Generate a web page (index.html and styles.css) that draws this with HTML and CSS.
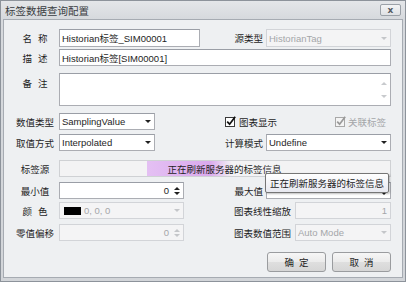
FILE: index.html
```html
<!DOCTYPE html>
<html lang="zh-CN">

<head>
  <meta charset="UTF-8">
  <meta name="viewport" content="width=device-width, initial-scale=1.0">
  <title>标签数据查询配置</title>
  <link rel="stylesheet" href="styles.css">
</head>

<body>
  <div class="win">
    <div class="titlebar">
      <span class="title">标签数据查询配置</span>
      <span class="close">x</span>
    </div>
    <div class="panel">
      <div class="row r1">
        <span class="lbl"><span class="sp">名称</span></span>
        <div class="fld w-name">Historian标签_SIM00001</div>
        <div class="right">
          <span class="rlbl">源类型</span>
          <div class="fld dis w-wide">HistorianTag<i class="arr"></i></div>
        </div>
      </div>
      <div class="row r2">
        <span class="lbl"><span class="sp">描述</span></span>
        <div class="fld grow">Historian标签[SIM00001]</div>
      </div>
      <div class="row r3">
        <span class="lbl memo-lbl"><span class="sp">备注</span></span>
        <div class="fld grow memo">
          <span class="vscroll"><i class="up"></i><i class="dn"></i></span>
        </div>
      </div>
      <div class="row r4">
        <span class="lbl">数值类型</span>
        <div class="fld w-combo">SamplingValue<i class="arr"></i></div>
        <div class="right checks">
          <span class="chk">
            <svg width="11" height="11" viewBox="0 0 11 11"><rect x="0.5" y="1.5" width="9" height="9" fill="#fff" stroke="#3a3a3a"/><path d="M2.2 5.6 L4.6 8.2 L10.2 0.8" fill="none" stroke="#111" stroke-width="1.7"/></svg>
            图表显示
          </span>
          <span class="chk off">
            <svg width="11" height="11" viewBox="0 0 11 11"><rect x="0.5" y="1.5" width="9" height="9" fill="#f4f4f4" stroke="#a8a8a8"/><path d="M2.2 5.6 L4.6 8.2 L10.2 0.8" fill="none" stroke="#9a9a9a" stroke-width="1.7"/></svg>
            关联标签
          </span>
        </div>
      </div>
      <div class="row r5">
        <span class="lbl">取值方式</span>
        <div class="fld w-combo">Interpolated<i class="arr"></i></div>
        <div class="right">
          <span class="rlbl">计算模式</span>
          <div class="fld w-wide">Undefine<i class="arr"></i></div>
        </div>
      </div>
      <div class="row r6">
        <span class="lbl">标签源</span>
        <div class="fld grow src">正在刷新服务器的标签信息</div>
      </div>
      <div class="row r7">
        <span class="lbl">最小值</span>
        <div class="fld w-spin num">0<span class="spin"><i class="up"></i><i class="dn"></i></span></div>
        <div class="right">
          <span class="rlbl">最大值</span>
          <div class="tip-wrap">
            <div class="fld w-wide num"><span class="spin"><i class="up"></i><i class="dn"></i></span></div>
            <div class="tooltip">正在刷新服务器的标签信息</div>
          </div>
        </div>
      </div>
      <div class="row r8">
        <span class="lbl"><span class="sp">颜色</span></span>
        <div class="fld dis w-spin">
          <span class="swatch"></span>0, 0, 0<i class="arr"></i>
        </div>
        <div class="right">
          <span class="rlbl long">图表线性缩放</span>
          <div class="fld dis w-narrow num">1</div>
        </div>
      </div>
      <div class="row r9">
        <span class="lbl">零值偏移</span>
        <div class="fld dis w-spin num">0<span class="spin"><i class="up"></i><i class="dn"></i></span></div>
        <div class="right">
          <span class="rlbl long">图表数值范围</span>
          <div class="fld dis w-narrow">Auto Mode<i class="arr"></i></div>
        </div>
      </div>
      <div class="btns">
        <span class="btn">确定</span>
        <span class="btn">取消</span>
      </div>
    </div>
  </div>
</body>

</html>
```

FILE: styles.css
```css
* {
  box-sizing: border-box;
}

body {
  margin: 0;
  background: #fff;
  font-family: "Liberation Sans", "Noto Sans CJK SC", sans-serif;
  font-size: 9.5px;
  color: #1e1e1e;
}

.win {
  width: 406px;
  height: 282px;
  border: 1px solid #8d939b;
  background: linear-gradient(#e4e6e9, #d6d9dd 18px, #d2d5d9);
  padding: 0 2px 3px;
  display: flex;
  flex-direction: column;
}

.titlebar {
  height: 18px;
  display: flex;
  align-items: center;
  padding-left: 2px;
}

.title {
  font-size: 10.5px;
  color: #3a3d42;
}

.close {
  margin-left: auto;
  margin-right: 2px;
  width: 21px;
  height: 12px;
  border: 1px solid #9ba1a8;
  border-radius: 2px;
  background: linear-gradient(#f3f4f5, #dfe1e4);
  font: bold 9px "DejaVu Sans", sans-serif;
  color: #555b62;
  display: flex;
  align-items: center;
  justify-content: center;
  line-height: 1;
}

.panel {
  flex: 1;
  border: 1px solid #a6abb2;
  background: #eef0f2;
  padding: 9px 11px 0 7px;
  display: flex;
  flex-direction: column;
}

.row {
  display: flex;
  align-items: center;
  height: 17px;
}

.r1 { height: 18px; }
.r2 { margin-top: 2px; }
.r3 { margin-top: 7px; height: 33px; align-items: flex-start; }
.r4 { margin-top: 7px; }
.r5 { margin-top: 4px; }
.r6 { margin-top: 9px; }
.r7 { margin-top: 5px; }
.r8 { margin-top: 3px; }
.r9 { margin-top: 5px; }

.lbl {
  flex: none;
  width: 48px;
  text-align: center;
}

.sp {
  letter-spacing: 6px;
  margin-right: -6px;
}

.memo-lbl {
  margin-top: 3px;
}

.right {
  margin-left: auto;
  display: flex;
  align-items: center;
  height: 100%;
}

.rlbl {
  margin-right: 3px;
}

.rlbl.long {
  margin-right: 4px;
}

.fld {
  height: 100%;
  border: 1px solid #abadb3;
  border-top-color: #9a9ea6;
  background: #fff;
  padding: 0 3px 0 2px;
  display: flex;
  align-items: center;
  white-space: nowrap;
}

.fld.dis {
  border-color: #d2d4d8;
  background: #f4f4f5;
  color: #a4a6a9;
}

.grow { flex: 1; }
.w-name { width: 141px; }
.w-combo { width: 96px; }
.w-spin { width: 125px; }
.w-wide { width: 125px; }
.w-narrow { width: 96px; }

.arr {
  margin-left: auto;
  width: 0;
  height: 0;
  border-left: 3px solid transparent;
  border-right: 3px solid transparent;
  border-top: 3px solid #202020;
}

.dis .arr {
  border-top-color: #c4c6c9;
}

.num {
  justify-content: flex-end;
}

.spin {
  display: flex;
  flex-direction: column;
  gap: 2px;
  margin-left: 5px;
}

.spin .up,
.vscroll .up {
  border-left: 3px solid transparent;
  border-right: 3px solid transparent;
  border-bottom: 3px solid #202020;
}

.spin .dn,
.vscroll .dn {
  border-left: 3px solid transparent;
  border-right: 3px solid transparent;
  border-top: 3px solid #202020;
}

.dis .spin .up { border-bottom-color: #c4c6c9; }
.dis .spin .dn { border-top-color: #c4c6c9; }

.memo {
  justify-content: flex-end;
  align-items: stretch;
  padding: 0 3px 0 0;
}

.vscroll {
  display: flex;
  flex-direction: column;
  justify-content: space-between;
  padding: 8px 0 7px;
}

.vscroll .up { border-bottom-color: #c8cacd; }
.vscroll .dn { border-top-color: #c8cacd; }

.checks {
  gap: 58px;
  margin-right: 5px;
}

.chk {
  display: flex;
  align-items: center;
  gap: 3px;
}

.chk.off {
  color: #a4a6a9;
  gap: 2px;
}

.src {
  justify-content: center;
  border-color: #cfd1d4;
  background: linear-gradient(90deg, transparent 87px, #e4c0f3 87px, #daa9ed 150px, rgba(222, 178, 240, 0) 172px) #f3f3f4;
}

.tip-wrap {
  position: relative;
  height: 100%;
}

.tooltip {
  position: absolute;
  left: -1px;
  top: -9px;
  width: 124px;
  height: 20px;
  border: 1px solid #767676;
  border-radius: 2px;
  background: linear-gradient(#ffffff, #e8e9f0);
  box-shadow: 1px 1px 2px rgba(0, 0, 0, .25);
  padding-left: 4px;
  display: flex;
  align-items: center;
  white-space: nowrap;
  color: #222;
}

.swatch {
  width: 17px;
  height: 8px;
  background: #000;
  margin: 0 3px 0 2px;
}

.btns {
  display: flex;
  justify-content: flex-end;
  gap: 6px;
  margin-top: 11px;
}

.btn {
  width: 59px;
  height: 20px;
  border: 1px solid #9a9c9f;
  border-radius: 3px;
  background: linear-gradient(#f6f6f6, #ebebeb 50%, #dfdfdf 50%, #d6d6d6);
  display: flex;
  align-items: center;
  justify-content: center;
  letter-spacing: 5px;
  padding-left: 5px;
}
```
